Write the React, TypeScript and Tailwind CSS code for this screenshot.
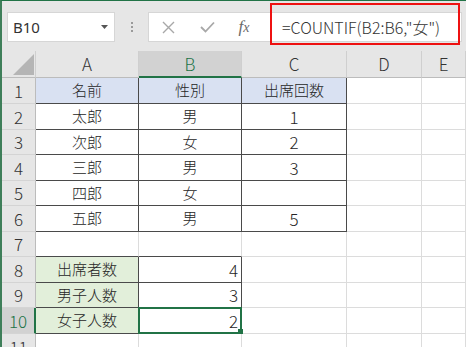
import React from 'react'
import clsx from 'clsx'

const cols = ['A', 'B', 'C', 'D', 'E']

const data: string[][] = [
  ['名前', '性別', '出席回数'],
  ['太郎', '男', '1'],
  ['次郎', '女', '2'],
  ['三郎', '男', '3'],
  ['四郎', '女', ''],
  ['五郎', '男', '5'],
  ['', '', ''],
  ['出席者数', '4', ''],
  ['男子人数', '3', ''],
  ['女子人数', '2', ''],
  ['', '', ''],
]

// table outlines: A1:C6 and A8:B10
const inTable = (r: number, c: number) =>
  (r >= 1 && r <= 6 && c >= 1 && c <= 3) || (r >= 8 && r <= 10 && c >= 1 && c <= 2)

const FormulaBar: React.FC = () => (
  <div className="h-[50px] bg-[#e6e6e6] flex items-start pt-[11px] pl-[5px] pr-[4px]">
    <div className="w-[108px] h-[30px] bg-white border border-[#d6d6d6] flex items-center justify-between pl-[5px] pr-[6px]">
      <span className="text-[15px] text-[#333] font-['Noto_Sans',sans-serif]">B10</span>
      <svg width="7" height="4" viewBox="0 0 7 4">
        <polygon points="0,0 7,0 3.5,4" fill="#555" />
      </svg>
    </div>
    <div className="w-[33px] h-[30px] flex flex-col items-center justify-center gap-[2px]">
      <span className="w-[2px] h-[2px] bg-[#9a9a9a]" />
      <span className="w-[2px] h-[2px] bg-[#9a9a9a]" />
      <span className="w-[2px] h-[2px] bg-[#9a9a9a]" />
    </div>
    <div className="flex-1 h-[30px] bg-white border border-[#d6d6d6] flex items-center">
      <div className="w-[39px] flex justify-center">
        <svg width="13" height="13" viewBox="0 0 13 13">
          <path d="M1 1 L12 12 M12 1 L1 12" stroke="#a8a8a8" strokeWidth="1.4" fill="none" />
        </svg>
      </div>
      <div className="w-[38px] flex justify-center">
        <svg width="15" height="12" viewBox="0 0 15 12">
          <path d="M1 6 L5.5 10.5 L14 1.5" stroke="#a8a8a8" strokeWidth="1.8" fill="none" />
        </svg>
      </div>
      <div className="w-[36px] flex justify-center">
        <span className="text-[17px] italic text-[#6a6a6a] font-['Liberation_Serif',serif]">
          f<span className="text-[14px]">x</span>
        </span>
      </div>
      <span className="pl-[20px] text-[16px] font-light text-[#333] font-['Noto_Sans_CJK_JP',sans-serif] whitespace-nowrap">
        =COUNTIF(B2:B6,"女")
      </span>
    </div>
  </div>
)

export default function App() {
  return (
    <div className="relative w-[466px] h-[347px] overflow-hidden bg-white border-l-2 border-t border-l-[#3f7f5a] border-t-[#217346] font-['Noto_Sans_CJK_JP',sans-serif]">
      <FormulaBar />

      <div className="grid grid-cols-[34px_103px_103px_105px_75px_1fr] grid-rows-[27px_26px_26px_25px_26px_25px_26px_25px_26px_25px_26px_26px]">
        {/* corner */}
        <div className="bg-[#e6e6e6] border-r border-b border-r-[#cfcfcf] border-b-[#bcbcbc] flex items-end justify-end pr-[1px] pb-[2px]">
          <svg width="21" height="21" viewBox="0 0 21 21">
            <polygon points="21,0 21,21 0,21" fill="#b5b5b5" />
          </svg>
        </div>
        {cols.map(c => (
          <div
            key={c}
            className={clsx(
              'flex items-center justify-center text-[17px] font-light border-r border-r-[#cfcfcf]',
              c === 'B'
                ? 'bg-[#d2d2d2] text-[#217346] border-b-2 border-b-[#217346]'
                : 'bg-[#e6e6e6] text-[#333] border-b border-b-[#bcbcbc]'
            )}
          >
            {c}
          </div>
        ))}

        {data.map((row, i) => {
          const r = i + 1
          return (
            <React.Fragment key={r}>
              <div
                className={clsx(
                  'flex items-center justify-center text-[17px] font-light border-b border-b-[#d4d4d4]',
                  r === 10
                    ? 'bg-[#d2d2d2] text-[#217346] border-r-2 border-r-[#217346]'
                    : 'bg-[#e6e6e6] text-[#333] border-r border-r-[#bcbcbc]'
                )}
              >
                {r}
              </div>
              {cols.map((_, ci) => {
                const c = ci + 1
                const text = row[ci] ?? ''
                const rightDark = inTable(r, c) || inTable(r, c + 1)
                const bottomDark = inTable(r, c) || inTable(r + 1, c)
                const numeric = /^\d+$/.test(text)
                const rightAlign = r >= 8 && c === 2
                return (
                  <div
                    key={c}
                    className={clsx(
                      'relative flex items-center border-r border-b font-light text-[#262626]',
                      rightDark ? 'border-r-[#4a4a4a]' : 'border-r-[#dcdcdc]',
                      bottomDark ? 'border-b-[#4a4a4a]' : 'border-b-[#dcdcdc]',
                      r === 1 && c <= 3 && 'bg-[#d9e1f2]',
                      r >= 8 && r <= 10 && c === 1 && 'bg-[#e2efda]',
                      rightAlign ? 'justify-end pr-[3px]' : 'justify-center',
                      numeric ? 'text-[17px]' : 'text-[15px]'
                    )}
                  >
                    {text}
                    {r === 10 && c === 2 && (
                      <>
                        <div className="absolute -left-px -top-px -right-px -bottom-px border-2 border-[#217346] z-10" />
                        <div className="absolute right-[-2px] bottom-[-1px] w-[5px] h-[5px] bg-[#217346] z-20" />
                      </>
                    )}
                  </div>
                )
              })}
            </React.Fragment>
          )
        })}
      </div>

      {/* red highlight round the formula */}
      <div className="absolute left-[268px] top-[2px] w-[190px] h-[42px] border-2 border-[#ee1111]" />
    </div>
  )
}
